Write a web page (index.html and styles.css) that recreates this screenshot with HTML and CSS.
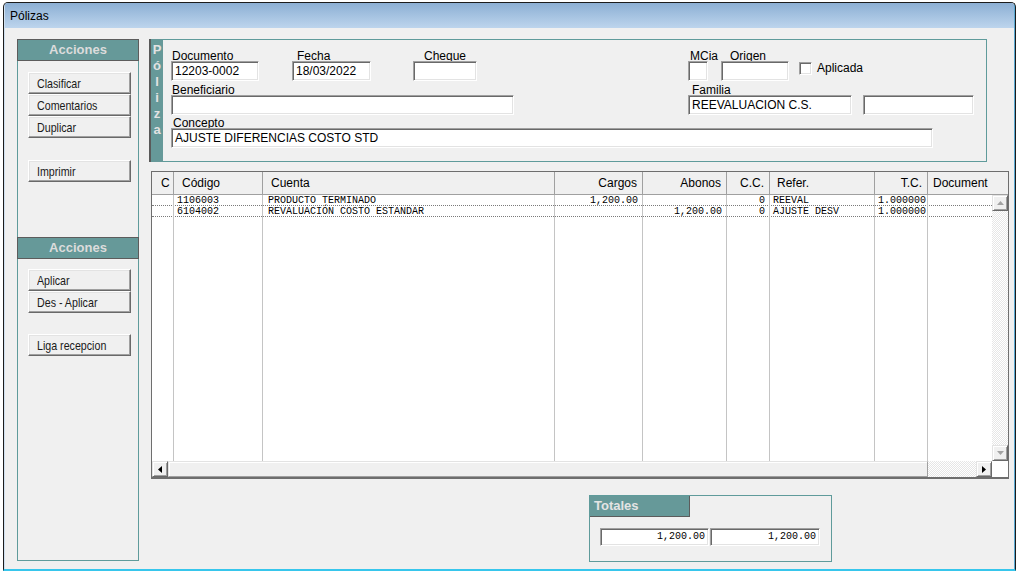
FILE: index.html
```html
<!DOCTYPE html>
<html lang="es">
<head>
    <meta charset="UTF-8">
    <title>Pólizas</title>
    <link rel="stylesheet" href="styles.css">
</head>
<body>
<div class="window">
    <div class="titlebar">Pólizas</div>

    <div class="client">
        <!-- panel de acciones -->
        <aside class="side">
            <div class="side-head">Acciones</div>
            <button class="btn first"><span>Clasificar</span></button>
            <button class="btn"><span>Comentarios</span></button>
            <button class="btn"><span>Duplicar</span></button>
            <button class="btn sep"><span>Imprimir</span></button>

            <div class="side-head second">Acciones</div>
            <button class="btn first"><span>Aplicar</span></button>
            <button class="btn"><span>Des - Aplicar</span></button>
            <button class="btn sep2"><span>Liga recepcion</span></button>
        </aside>

        <div class="main">
            <!-- encabezado de la poliza -->
            <section class="poliza">
                <div class="strip">
                    <span>P</span><span>ó</span><span>l</span><span>i</span><span>z</span><span>a</span>
                </div>
                <div class="pform">
                    <div class="prow">
                        <div class="fld f-doc"><div class="lbl">Documento</div><div class="inp">12203-0002</div></div>
                        <div class="fld f-fecha"><div class="lbl">Fecha</div><div class="inp">18/03/2022</div></div>
                        <div class="fld f-cheque"><div class="lbl">Cheque</div><div class="inp"></div></div>
                        <div class="fld f-mcia"><div class="lbl">MCia</div><div class="inp"></div></div>
                        <div class="fld f-origen"><div class="lbl">Origen</div><div class="inp"></div></div>
                        <label class="chkwrap"><span class="chk"></span>Aplicada</label>
                    </div>
                    <div class="prow r2">
                        <div class="fld f-benef"><div class="lbl">Beneficiario</div><div class="inp"></div></div>
                        <div class="fld f-familia"><div class="lbl">Familia</div><div class="inp">REEVALUACION C.S.</div></div>
                        <div class="fld f-extra"><div class="lbl"></div><div class="inp"></div></div>
                    </div>
                    <div class="prow r3">
                        <div class="fld f-concepto"><div class="lbl">Concepto</div><div class="inp">AJUSTE DIFERENCIAS COSTO STD</div></div>
                    </div>
                </div>
            </section>

            <!-- partidas -->
            <div class="grid">
                <div class="ghead">
                    <div class="hc pc">C</div>
                    <div class="hc">Código</div>
                    <div class="hc">Cuenta</div>
                    <div class="hc num">Cargos</div>
                    <div class="hc num">Abonos</div>
                    <div class="hc num">C.C.</div>
                    <div class="hc pr">Refer.</div>
                    <div class="hc num">T.C.</div>
                    <div class="hc pd last">Document</div>
                </div>
                <div class="gbody">
                    <div class="gdata">
                        <div class="grow">
                            <div class="c"></div>
                            <div class="c cod">1106003</div>
                            <div class="c cta">PRODUCTO TERMINADO</div>
                            <div class="c n">1,200.00</div>
                            <div class="c n"></div>
                            <div class="c n">0</div>
                            <div class="c ref">REEVAL</div>
                            <div class="c ref">1.000000</div>
                            <div class="c last"></div>
                        </div>
                        <div class="grow">
                            <div class="c"></div>
                            <div class="c cod">6104002</div>
                            <div class="c cta">REVALUACIÓN COSTO ESTANDAR</div>
                            <div class="c n"></div>
                            <div class="c n">1,200.00</div>
                            <div class="c n">0</div>
                            <div class="c ref">AJUSTE DESV</div>
                            <div class="c ref">1.000000</div>
                            <div class="c last"></div>
                        </div>
                        <div class="grow fill">
                            <div class="c"></div><div class="c"></div><div class="c"></div>
                            <div class="c"></div><div class="c"></div><div class="c"></div>
                            <div class="c"></div><div class="c"></div><div class="c last"></div>
                        </div>
                    </div>
                    <div class="vscroll">
                        <div class="sbtn"><svg width="7" height="4"><path d="M3.5 0L7 4H0Z" fill="#a3a3a3"/></svg></div>
                        <div class="track"></div>
                        <div class="sbtn"><svg width="7" height="4"><path d="M0 0H7L3.5 4Z" fill="#a3a3a3"/></svg></div>
                    </div>
                </div>
                <div class="hscroll">
                    <div class="sbtn"><svg width="4" height="7"><path d="M0 3.5L4 0V7Z" fill="#000"/></svg></div>
                    <div class="thumb"></div>
                    <div class="track"></div>
                    <div class="sbtn"><svg width="4" height="7"><path d="M0 0L4 3.5L0 7Z" fill="#000"/></svg></div>
                    <div class="corner"></div>
                </div>
            </div>

            <!-- totales -->
            <section class="totales">
                <div class="tot-head">Totales</div>
                <div class="tot-row">
                    <div class="tinp">1,200.00</div>
                    <div class="tinp wide">1,200.00</div>
                </div>
            </section>
        </div>
    </div>
</div>
</body>
</html>
```

FILE: styles.css
```css
* { box-sizing: border-box; }
body { margin: 0; background: #fff; font-family: "Liberation Sans", Arial, sans-serif; font-size: 12px; color: #000; }

.window { width: 1013px; height: 569px; margin: 2px 0 0 3px; padding: 0 1px; border: 1px solid #1c1c1c; border-bottom: 2px solid #37c6ec; border-radius: 5px 5px 0 0; display: flex; flex-direction: column; overflow: hidden;
    background: linear-gradient(90deg, #cfe0f0 0 1px, #f0f0f0 1px calc(100% - 1px), #5aa9d2 0); }
.titlebar { height: 25px; flex: none; padding-left: 5px; line-height: 26px; background: linear-gradient(#8cafd4, #bdd5ed); }
.client { flex: 1; display: flex; padding: 11px 0 0 12px; background: #f0f0f0; }

/* panel lateral */
.side { width: 122px; height: 522px; flex: none; border: 1px solid #5f9b9b; display: flex; flex-direction: column; align-items: flex-start; }
.side-head { align-self: stretch; height: 22px; margin: -1px -1px 0; background: #669999; border: 1px solid #5c5c5c; color: #dcdcdc; font-weight: bold; font-size: 13px; text-align: center; line-height: 20px; }
.side-head.second { margin-top: 55px; }
.btn { display: block; width: 103px; height: 22px; margin-left: 10px; padding: 0 0 0 8px; font-family: "Liberation Sans", sans-serif; font-size: 13px; color: #1a1a1a; text-align: left; white-space: nowrap; background: #f0f0f0; border: 1px solid; border-color: #fff #696969 #696969 #fff; box-shadow: inset -1px -1px #a0a0a0, inset 1px 1px #e3e3e3; }
.btn span { display: inline-block; transform: scaleX(0.82); transform-origin: 0 50%; }
.btn.first { margin-top: 11px; }
.side-head.second + .btn.first { margin-top: 10px; }
.btn.sep { margin-top: 22px; }
.btn.sep2 { margin-top: 21px; }

.main { margin-left: 10px; width: 860px; display: flex; flex-direction: column; }

/* poliza */
.poliza { width: 838px; height: 123px; display: flex; border: 1px solid #5f9b9b; border-left: 0; }
.strip { width: 14px; margin: -1px 0; border-left: 2px solid #5a5a5a; background: #669999; display: flex; flex-direction: column; align-items: center; padding-top: 3px; color: #e2e2e2; font-weight: bold; font-size: 13px; line-height: 16px; }
.pform { flex: 1; padding: 10px 0 0 8px; }
.prow { display: flex; align-items: flex-start; }
.prow.r2 { margin-top: 3px; }
.prow.r3 { margin-top: 2px; }
.fld { display: flex; flex-direction: column; flex: none; }
.lbl { height: 12px; line-height: 12px; white-space: nowrap; margin-bottom: -1px; }
.inp { position: relative; height: 20px; padding-left: 3px; line-height: 18px; white-space: nowrap; overflow: hidden; background: #fff; border: 1px solid; border-color: #a0a0a0 #fff #fff #a0a0a0; box-shadow: inset 1px 1px #696969, inset -1px -1px #e3e3e3; }

.f-doc { width: 88px; }
.f-doc .lbl { padding-left: 1px; }
.f-fecha { width: 79px; margin-left: 33px; }
.f-fecha .lbl { padding-left: 5px; }
.f-cheque { width: 64px; margin-left: 42px; }
.f-cheque .lbl { padding-left: 11px; }
.f-mcia { width: 20px; margin-left: 211px; }
.f-mcia .lbl { padding-left: 2px; }
.f-origen { width: 68px; margin-left: 13px; }
.f-origen .lbl { padding-left: 9px; }
.f-benef { width: 343px; }
.f-benef .lbl { padding-left: 1px; }
.f-familia { width: 164px; margin-left: 174px; }
.f-familia .lbl { padding-left: 4px; }
.f-extra { width: 111px; margin-left: 11px; }
.f-concepto { width: 762px; }
.f-concepto .lbl { padding-left: 2px; }

.chkwrap { display: flex; align-items: center; margin: 12px 0 0 10px; line-height: 13px; }
.chk { width: 13px; height: 13px; margin-right: 5px; background: #fff; border: 1px solid; border-color: #a0a0a0 #fff #fff #a0a0a0; box-shadow: inset 1px 1px #696969, inset -1px -1px #e3e3e3; }

/* rejilla */
.grid { width: 858px; height: 308px; margin: 9px 0 0 2px; display: flex; flex-direction: column; background: #fff; border: 1px solid #6e6e6e; border-bottom-width: 2px; }
.ghead { height: 23px; flex: none; display: grid; grid-template-columns: 22px 89px 292px 88px 84px 43px 105px 53px 80px; background: #f0f0f0; border-bottom: 1px solid #a0a0a0; }
.hc { padding-left: 8px; line-height: 22px; white-space: nowrap; overflow: hidden; border-right: 1px solid #a0a0a0; }
.hc.pc { padding-left: 9px; }
.hc.num { padding: 0 5px 0 0; text-align: right; }
.hc.pr { padding-left: 7px; }
.hc.pd { padding-left: 5px; }
.hc.last { border-right: 0; }

.gbody { flex: 1; display: flex; min-height: 0; }
.gdata { flex: 1; display: flex; flex-direction: column; overflow: hidden; }
.grow { height: 11px; flex: none; display: grid; grid-template-columns: 22px 89px 292px 88px 84px 43px 105px 53px 1fr; border-bottom: 1px dotted #7a7a7a; font-family: "Liberation Mono", monospace; font-size: 10px; line-height: 10px; }
.grow.fill { flex: 1; border-bottom: 0; }
.c { white-space: nowrap; overflow-x: clip; overflow-y: visible; border-right: 1px solid #c4c4c4; padding-top: 1px; }
.c.last { border-right: 0; }
.c.cod { padding-left: 3px; }
.c.cta { padding-left: 5px; }
.c.n { padding-right: 4px; text-align: right; }
.c.ref { padding-left: 3px; }

.vscroll { width: 16px; flex: none; display: flex; flex-direction: column; }
.track { flex: 1; background: conic-gradient(#fff 25%, #e6e6e6 0 50%, #fff 0 75%, #e6e6e6 0) 0 0 / 2px 2px; }
.sbtn { width: 16px; height: 16px; flex: none; display: flex; align-items: center; justify-content: center; background: #f0f0f0; border: 1px solid; border-color: #e3e3e3 #696969 #696969 #e3e3e3; box-shadow: inset 1px 1px #fff, inset -1px -1px #a0a0a0; }
.hscroll { height: 16px; flex: none; display: flex; }
.thumb { width: 760px; background: #f0f0f0; border: 1px solid; border-color: #e3e3e3 #a0a0a0 #a0a0a0 #e3e3e3; box-shadow: inset 1px 1px #fff; }
.corner { width: 16px; background: #fff; }

/* totales */
.totales { width: 243px; height: 67px; margin: 16px 0 0 440px; border: 1px solid #5f9b9b; }
.tot-head { width: 100px; height: 21px; padding-left: 4px; background: #669999; border-right: 1px solid #5c5c5c; border-bottom: 1px solid #5c5c5c; color: #e4e4e4; font-weight: bold; font-size: 13px; line-height: 20px; }
.tot-row { display: flex; gap: 1px; margin: 11px 0 0 10px; }
.tinp { width: 109px; height: 18px; padding-right: 3px; text-align: right; font-family: "Liberation Mono", monospace; font-size: 10px; line-height: 16px; background: #fff; border: 1px solid; border-color: #a0a0a0 #fff #fff #a0a0a0; box-shadow: inset 1px 1px #696969, inset -1px -1px #e3e3e3; }
.tinp.wide { width: 110px; }
```
